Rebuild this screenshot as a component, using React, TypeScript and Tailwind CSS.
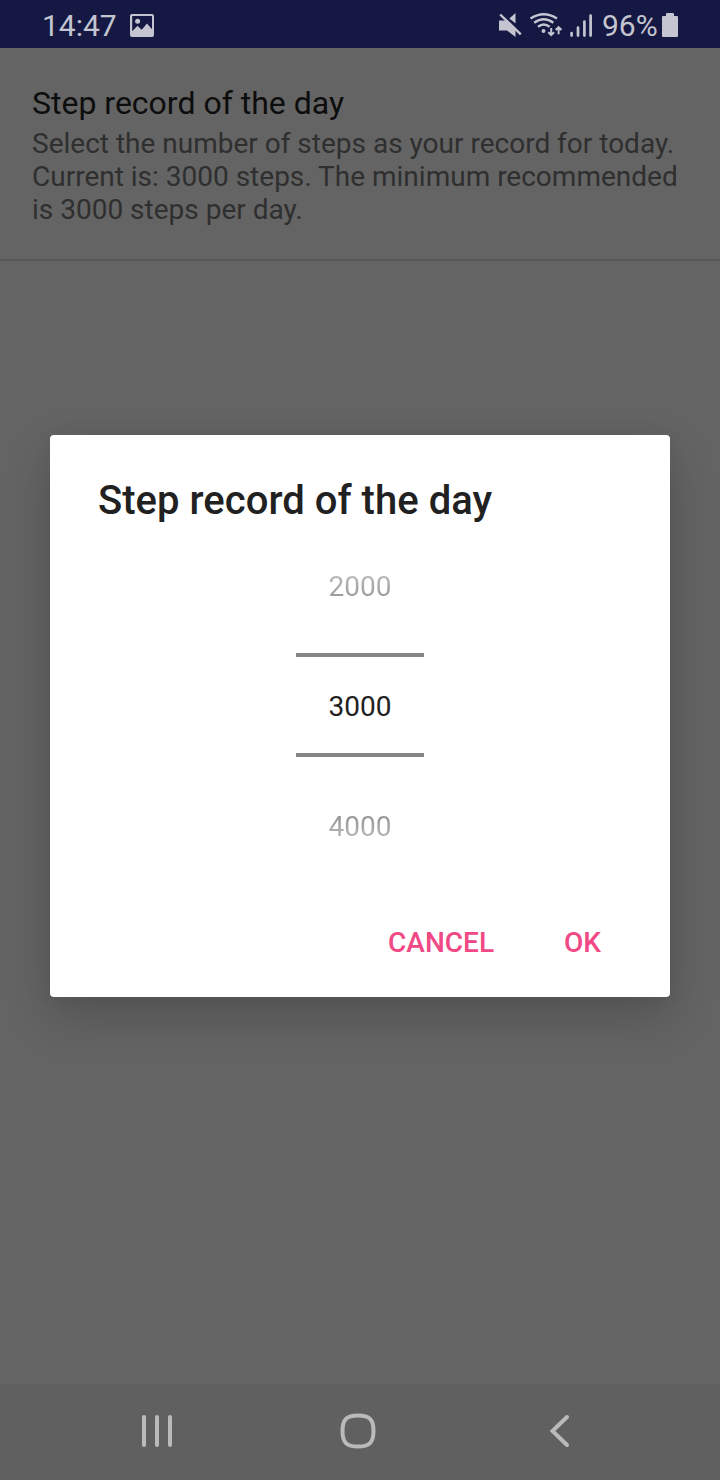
import React from "react";

function PictureIcon() {
  return (
    <svg className="h-6 w-6" viewBox="130 13 24 24">
      <path
        fillRule="evenodd"
        fill="currentColor"
        d="M132 14h20a2 2 0 0 1 2 2v19a2 2 0 0 1-2 2h-20a2 2 0 0 1-2-2V16a2 2 0 0 1 2-2ZM132.2 16v15.2l5.3-5.4 4.2 4 5.3-6.2 5 5.6V16Z"
      />
      <circle cx="137.6" cy="21.3" r="2.5" fill="currentColor" />
    </svg>
  );
}

function MuteIcon() {
  return (
    <svg className="h-7 w-6" viewBox="498 11 24 28" fill="currentColor">
      <path d="M499 20.5h7.2L515.5 29.500v7.500l-8.5-6.5h-8Z" />
      <path d="M515.5 13v10.400l-6.200-4.800Z" />
      <path d="M500.2 14.5 520.8 34.4" stroke="currentColor" strokeWidth="2.4" fill="none" />
    </svg>
  );
}

function WifiIcon() {
  return (
    <svg className="h-7 w-[34px]" viewBox="529 11 34 28" fill="none" stroke="currentColor">
      <path d="M530.5 18.6Q543.8 9.8 557 18.6" strokeWidth="2.4" />
      <path d="M534.2 22.8Q543.8 15.8 553.3 22.8" strokeWidth="2.4" />
      <path d="M538 26.8Q543.8 22.2 549.6 26.8" strokeWidth="2.4" />
      <circle cx="543.5" cy="31" r="2" fill="currentColor" stroke="none" />
      <path d="M551.2 28v7M548.3 32.3l2.9 2.9 2.9-2.9M558.6 34.2v-7M555.7 30l2.9-2.9 2.9 2.9" strokeWidth="2" />
    </svg>
  );
}

function SignalIcon() {
  return (
    <svg className="h-7 w-6" viewBox="569 11 24 28" stroke="currentColor" strokeWidth="2.7" strokeLinecap="round">
      <path d="M571.6 33v2.600M578 27.5V35.600M584.4 21.5V35.600M590.6 15.6V35.600" />
    </svg>
  );
}

function BatteryIcon() {
  return (
    <svg className="h-7 w-4" viewBox="662 11 16 28" fill="currentColor">
      <path d="M667 13h6a1 1 0 0 1 1 1v2h3a1 1 0 0 1 1 1v19a1 1 0 0 1-1 1h-14a1 1 0 0 1-1-1V17a1 1 0 0 1 1-1h3v-2a1 1 0 0 1 1-1Z" />
    </svg>
  );
}

function StatusBar() {
  return (
    <header className="flex h-12 shrink-0 items-center bg-[#141842] pt-[2px] pr-[42px] pl-[42px] text-[30px] leading-[46px] text-[#c4c5d0]">
      <span className="w-[88px] pt-[2px] leading-[44px]">14:47</span>
      <PictureIcon />
      <div className="ml-auto flex items-center">
        <MuteIcon />
        <span className="w-[7px]" />
        <WifiIcon />
        <span className="w-[6px]" />
        <SignalIcon />
        <span className="ml-[9px] w-[60px] pt-[2px] leading-[44px]">96%</span>
        <BatteryIcon />
      </div>
    </header>
  );
}

function StepDialog() {
  return (
    <div
      role="dialog"
      className="absolute top-[435px] left-[50px] flex h-[562px] w-[620px] flex-col rounded-[4px] bg-white text-[#212121] shadow-[0_20px_48px_rgba(0,0,0,0.18),0_0_20px_rgba(0,0,0,0.05)]"
    >
      <h2 className="mt-[42px] pl-12 text-[40px] leading-[47px] font-medium tracking-[0.03px]">Step record of the day</h2>
      <div className="mx-auto mt-[44px] flex w-32 flex-col items-center text-[28px] leading-[38px]">
        <span className="bg-linear-to-b from-[#b9b9b9] from-20% to-[#949494] to-90% bg-clip-text text-transparent">2000</span>
        <div className="mt-[47px] flex h-[104px] w-full items-center justify-center border-y-4 border-[#858585] pt-1">
          <span>3000</span>
        </div>
        <span className="mt-[51px] bg-linear-to-b from-[#949494] from-20% to-[#b9b9b9] to-80% bg-clip-text text-transparent">4000</span>
      </div>
      <div className="mt-[78px] flex justify-end pr-[69px] text-[28px] leading-[38px] font-medium text-[#f14886]">
        <button className="mr-[70px]">CANCEL</button>
        <button>OK</button>
      </div>
    </div>
  );
}

function NavigationBar() {
  return (
    <nav className="mt-auto flex h-24 shrink-0 items-center bg-[#606060] pb-[2px] text-[#bababa]">
      <svg className="ml-[137px] h-10 w-10" viewBox="137 1411 40 40" stroke="currentColor" strokeWidth="4" strokeLinecap="round">
        <path d="M144 1417v28M157 1417v28M170 1417v28" />
      </svg>
      <svg className="ml-[161px] h-10 w-10" viewBox="338 1411 40 40" fill="none" stroke="currentColor" strokeWidth="4">
        <path d="M358 1415.500c11.5 0 15.5 4 15.5 15.500s-4 15.500-15.5 15.500-15.5-4-15.5-15.500 4-15.500 15.5-15.500Z" />
      </svg>
      <svg className="ml-[162px] h-10 w-10" viewBox="540 1411 40 40" fill="none" stroke="currentColor" strokeWidth="4" strokeLinecap="round">
        <path d="M567 1417 552.500 1431 567 1445" />
      </svg>
    </nav>
  );
}

export default function App() {
  return (
    <div className="relative flex h-[1480px] w-[720px] flex-col overflow-hidden bg-[#646464] font-['Roboto',sans-serif]">
      <StatusBar />
      <section className="h-[213px] shrink-0 border-b-2 border-[#585858] px-8 pt-9">
        <h1 className="text-[32px] leading-[38px] text-[#0d0d0d]">Step record of the day</h1>
        <p className="mt-[5px] text-[28px] leading-[33px] whitespace-nowrap text-[#2f2f2f]">
          Select the number of steps as your record for today.
          <br />
          Current is: 3000 steps. The minimum recommended
          <br />
          is 3000 steps per day.
        </p>
      </section>
      <NavigationBar />
      <StepDialog />
    </div>
  );
}
